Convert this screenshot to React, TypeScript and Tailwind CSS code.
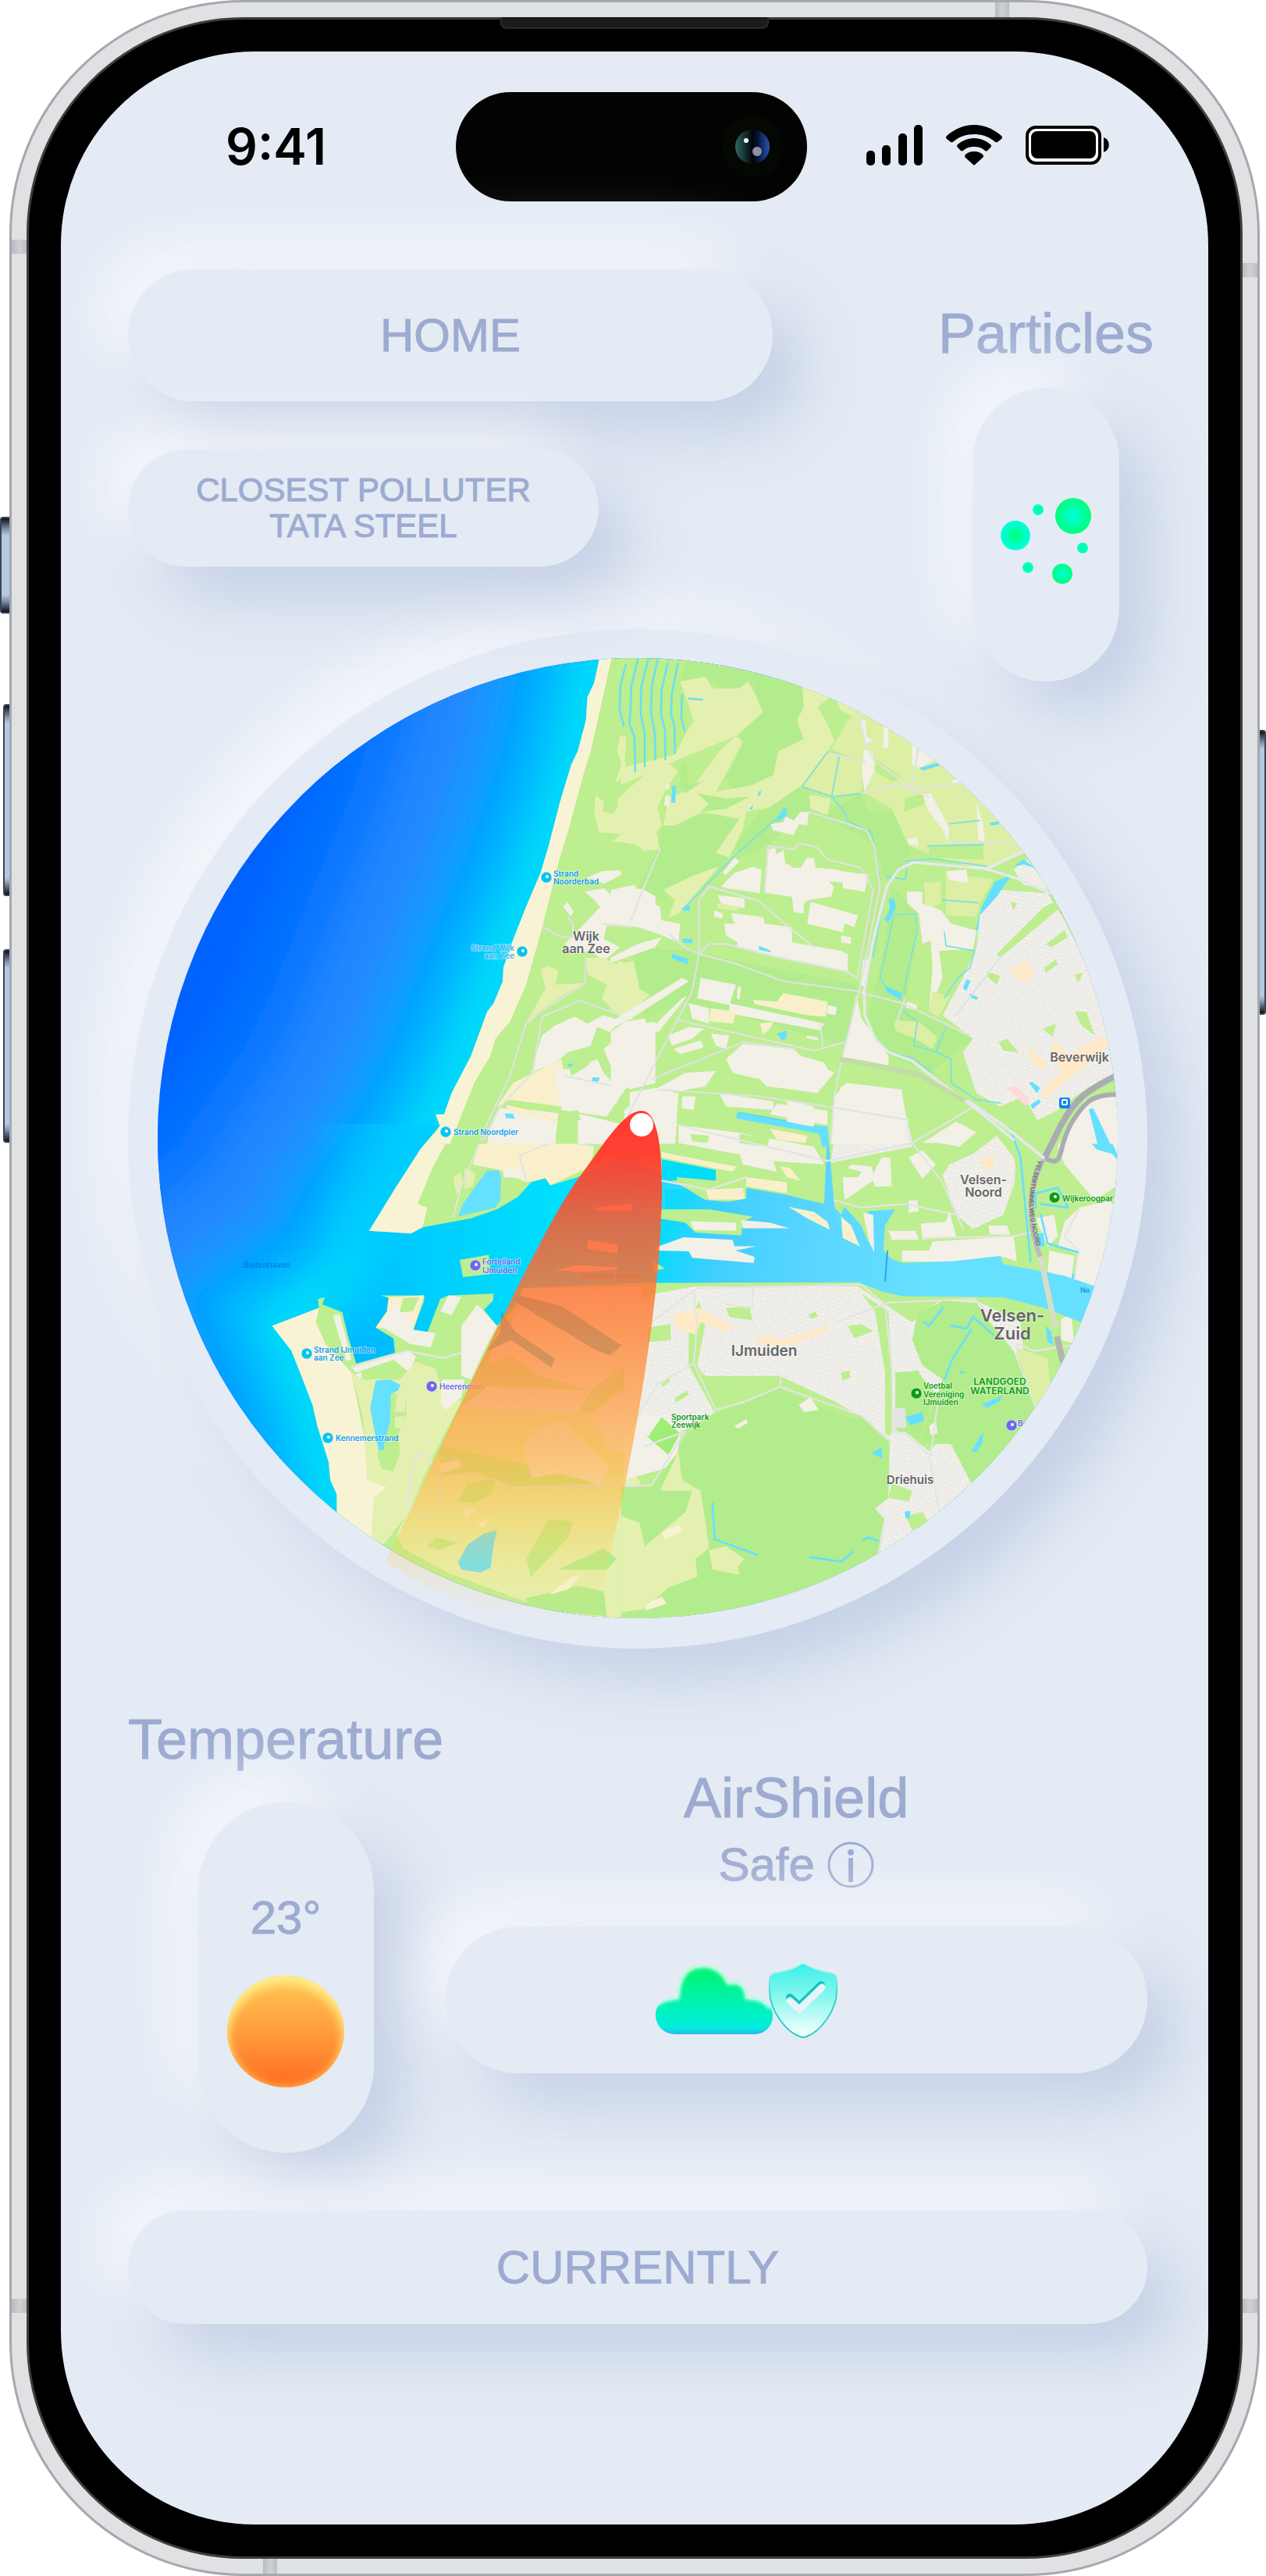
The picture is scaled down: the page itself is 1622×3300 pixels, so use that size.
import React from "react";

type Area = [fill: string, points: string];

const FOREST = "#b3ec8c";
const GRASS = "#bdee90";
const DUNE = "#e4f0b0";
const FIELD = "#dcefa5";
const TOWN = "#f3f0e8";
const SAND = "#f9f0cb";
const BEACH = "#f9f3d6";
const WATER = "#66e0ff";
const SHOPS = "#ffe9c6";
const STREETS = "url(#streets)";

/* ---------- Map data, one block per quadrant ---------- */

const northWest: Area[] = [
  [GRASS, "1466,100 1466,150 1450,220 1430,260 1425,330 1400,420 1380,460 1345,570 1310,700 1285,780 1240,880 1195,990 1170,1060 1168,1100 1140,1165 1120,1190 1070,1320 1010,1430 975,1525 940,1580 1560,1580 1560,100"],
  [BEACH, "1466,130 1466,150 1450,220 1430,260 1425,330 1400,420 1380,460 1345,570 1310,700 1285,780 1240,880 1195,990 1170,1060 1168,1100 1140,1165 1120,1190 1070,1320 1010,1430 975,1525 940,1580 1005,1580 1080,1400 1130,1320 1145,1270 1190,1220 1240,1110 1290,940 1340,750 1375,640 1420,480 1440,420 1508,130"],
  [DUNE, "1530,375 1550,378 1545,450 1555,490 1515,515 1535,460 1522,420"],
  [DUNE, "1455,550 1480,570 1478,600 1510,605 1530,570 1568,520 1640,560 1660,640 1600,700 1540,690 1505,688 1535,665 1465,660 1450,600"],
  [TOWN, "1425,795 1475,775 1530,772 1535,785 1480,812 1450,800"],
  [TOWN, "1420,835 1480,825 1520,860 1568,830 1640,820 1640,935 1490,935 1480,975 1530,1000 1480,1040 1440,1010 1380,1020 1360,990 1410,940 1470,880 1440,850"],
  [TOWN, "1355,880 1368,866 1388,895 1378,908"],
  [DUNE, "1285,1065 1310,1055 1340,1070 1330,1110 1420,1105 1340,1150 1280,1190 1240,1225 1300,1120"],
  [DUNE, "1425,1030 1480,1030 1520,1050 1600,1035 1640,1110 1600,1190 1510,1190 1475,1150 1490,1110 1430,1080"],
  [TOWN, "1290,1260 1330,1230 1390,1205 1430,1225 1480,1200 1530,1215 1500,1250 1460,1235 1440,1290 1370,1310 1330,1340 1255,1370 1280,1290"],
  [TOWN, "1480,1300 1568,1230 1640,1220 1640,1400 1560,1420 1510,1370"],
  [SAND, "1200,1400 1350,1330 1360,1390 1345,1470 1190,1450 1150,1470"],
  [TOWN, "1325,1360 1380,1360 1460,1330 1480,1370 1535,1430 1490,1500 1350,1480"],
  [TOWN, "1160,1475 1260,1480 1340,1490 1330,1580 1120,1580 1130,1520"],
  [SAND, "1180,1465 1330,1500 1340,1520 1180,1480"],
  [TOWN, "1400,1490 1568,1530 1568,1580 1400,1580"],
  [GRASS, "1370,1330 1400,1325 1410,1345 1440,1335 1430,1350 1380,1380"],
  [GRASS, "1350,1490 1400,1480 1410,1510 1355,1505"],
  [WATER, "1175,1490 1200,1492 1205,1506 1178,1504"],
  [WATER, "1445,1384 1468,1384 1464,1396 1443,1396"],
  [WATER, "1368,1345 1385,1342 1382,1352 1368,1352"],
];
const northWestRoads = [
  "1290,938 1345,968 1385,970 1385,930 1370,910",
  "1425,1030 1422,1108 1300,1180 1240,1225 1190,1380 1120,1520 1100,1568",
  "1290,1205 1405,1157 1568,1212",
  "1290,1205 1260,1370 1160,1470 1110,1568",
  "1480,930 1568,940",
  "1360,1380 1510,1410 1520,1460",
];

const northEast: Area[] = [
  [FOREST, "185,150 525,220 560,235 530,290 505,330 530,390 490,410 440,490 380,530 330,550 300,500 350,400 340,370 405,310 380,220 300,240 240,200 165,210"],
  [FOREST, "110,640 200,610 340,600 340,700 280,770 200,790 120,830 130,870 40,820 100,710"],
  [FOREST, "480,535 540,530 560,590 600,600 700,545 720,600 830,600 850,700 830,745 780,820 730,690 640,640 540,600 420,700 330,740 340,680 400,600 440,580"],
  [FOREST, "20,1000 190,1010 380,1050 690,1110 680,1300 620,1280 400,1220 180,1160 60,1210 40,1100"],
  [FOREST, "790,820 860,890 860,1000 830,1170 1030,1270 900,1370 760,1310 720,1200 760,1040"],
  [DUNE, "165,215 240,200 260,235 340,235 365,215 385,250 410,305 330,375 270,400 170,440 60,490 -10,520 -10,470 150,430 185,360 205,330"],
  [DUNE, "-20,560 60,490 130,455 160,480 130,520 100,580 90,640 105,710 60,715 -20,660"],
  [DUNE, "330,375 350,392 320,450 270,540 380,520 440,490 455,420 530,385 510,330 530,290 525,225 610,260 570,290 600,340 620,390 600,420 525,520 430,585 360,600 350,650 310,735 270,720 340,620 230,600 150,640 115,640 130,560 200,530 280,420"],
  [DUNE, "620,260 690,300 680,320 640,300"],
  [DUNE, "115,830 200,790 280,760 160,900 130,912 150,860"],
  [DUNE, "-20,1040 20,1050 20,1110 75,1140 10,1200 -20,1200"],
  [DUNE, "545,550 610,560 600,610 550,590"],
  [FOREST, "215,545 300,560 370,555 300,590 225,600 250,575"],
  [FOREST, "165,460 180,450 190,520 230,510 180,545 165,520"],
  [FIELD, "660,330 700,300 780,350 940,450 1060,570 1140,660 1190,720 1060,770 960,745 840,700 790,590 710,545 705,450 610,415"],
  [FIELD, "600,425 710,452 700,540 620,555 525,525"],
  [FIELD, "885,810 935,805 935,870 890,890"],
  [FIELD, "950,780 1090,800 1050,870 1040,910 950,905"],
  [GRASS, "745,445 820,500 790,510 740,480"],
  [GRASS, "830,560 900,540 880,580 825,600"],
  [GRASS, "900,700 1060,690 1060,740 900,735"],
  [TOWN, "695,330 712,330 715,375 735,390 710,400"],
  [TOWN, "765,345 780,355 780,410 765,410"],
  [TOWN, "708,415 735,425 738,480 708,540 702,480"],
  [TOWN, "850,395 930,440 870,470 850,460"],
  [TOWN, "835,680 865,675 870,700 840,695"],
  [TOWN, "880,545 905,545 940,610 960,650 955,690 940,650 900,600"],
  [TOWN, "1040,570 1060,640 1065,690 1045,680"],
  [TOWN, "965,510 985,500 1000,515 965,520"],
  [TOWN, "430,635 470,630 475,612 500,625 520,600 545,600 540,640 515,636 500,668 440,655"],
  [TOWN, "285,820 325,780 380,762 405,770 400,840 300,825"],
  [TOWN, "425,712 445,705 450,725 470,712 475,750 500,765 520,765 540,735 560,735 565,765 630,770 640,775 720,785 710,835 645,825 645,808 605,805 620,822 610,850 545,860 530,870 530,900 500,895 495,850 415,838"],
  [TOWN, "550,865 690,905 680,940 650,930 645,955 540,930"],
  [TOWN, "640,965 670,970 668,990 640,985"],
  [TOWN, "315,898 410,910 415,930 495,940 495,985 640,1010 660,1020 660,1070 470,1035 330,1000 335,985 300,965 295,930 325,930"],
  [TOWN, "265,890 290,900 290,915 265,910"],
  [TOWN, "275,845 355,855 355,885 285,870"],
  [FIELD, "275,870 345,880 330,892 275,885"],
  [TOWN, "290,780 325,735 340,745 300,785"],
  [TOWN, "122,520 134,518 132,532 124,532"],
  [TOWN, "120,555 134,550 130,585 118,580"],
  [TOWN, "-40,830 30,815 50,860 105,880 110,920 165,930 160,985 100,960 40,940 -40,930"],
  [TOWN, "-40,1030 40,990 110,970 90,1000 -40,1045"],
  [TOWN, "225,1090 330,1110 310,1170 215,1150"],
  [TOWN, "190,1165 250,1180 250,1225 200,1210"],
  [TOWN, "310,1165 590,1225 580,1245 310,1195"],
  [TOWN, "335,1115 345,1118 340,1155 332,1150"],
  [TOWN, "600,1170 628,1176 624,1200 598,1195"],
  [TOWN, "538,1260 572,1266 570,1274 538,1268"],
  [TOWN, "-40,1220 170,1090 190,1100 20,1210 -40,1240"],
  [TOWN, "80,1240 170,1150 185,1145 100,1250"],
  [TOWN, "0,1220 60,1210 80,1270 30,1380 -40,1480 -40,1250"],
  [TOWN, "130,1260 190,1235 235,1240 200,1270 140,1290"],
  [TOWN, "145,1300 225,1275 235,1295 165,1315"],
  [TOWN, "255,1255 310,1260 300,1300 270,1290"],
  [TOWN, "300,1330 350,1285 500,1300 520,1320 590,1340 600,1360 620,1370 570,1430 420,1410 400,1390 320,1370"],
  [TOWN, "90,1420 180,1370 270,1365 240,1410 160,1425"],
  [TOWN, "0,1480 70,1420 160,1430 150,1580 0,1580"],
  [TOWN, "170,1440 210,1440 205,1480 170,1475"],
  [TOWN, "280,1430 440,1455 440,1480 300,1470"],
  [TOWN, "480,1450 560,1470 560,1530 480,1520"],
  [TOWN, "685,1140 700,1210 780,1320 780,1350 645,1325"],
  [TOWN, "655,1400 820,1420 830,1580 610,1580 620,1440"],
  [TOWN, "705,1035 722,1035 712,1115 696,1112"],
  [TOWN, "835,835 880,835 880,870 935,890 965,930 1040,950 1030,1005 930,1010 940,1090 900,1190 910,1060 905,980 880,990 870,900 835,870"],
  [TOWN, "950,775 1010,770 1015,810 960,800"],
  [TOWN, "835,1160 865,1170 860,1185 832,1178"],
  [FIELD, "910,1130 960,1145 930,1205 900,1190"],
  [SAND, "380,1155 450,1160 470,1135 600,1160 595,1205 540,1200 385,1168"],
  [SAND, "255,1180 330,1190 320,1225 250,1218"],
  [SAND, "400,1225 440,1220 430,1240 410,1258"],
  [STREETS, "1110,830 1250,840 1300,920 1380,1080 1440,1280 1450,1370 1360,1420 1280,1480 1220,1510 1180,1440 1110,1470 1040,1430 1000,1310 1030,1270 940,1200 1000,1090 1040,1000 1050,900"],
  [STREETS, "1150,770 1190,740 1260,830 1180,815"],
  [GRASS, "1100,1020 1240,880 1280,860 1290,880 1110,1030"],
  [GRASS, "1245,990 1300,950 1310,970 1260,1000"],
  [GRASS, "1140,865 1160,870 1150,890"],
  [GRASS, "1070,1070 1110,1085 1100,1110 1075,1090"],
  [GRASS, "1240,1060 1275,1035 1280,1050 1245,1075"],
  [GRASS, "1330,1190 1365,1190 1375,1220 1390,1260 1350,1230"],
  [GRASS, "1235,1240 1275,1225 1265,1265"],
  [GRASS, "1105,1280 1130,1270 1165,1310 1120,1305"],
  [GRASS, "1330,1080 1355,1075 1340,1105"],
  [SHOPS, "1135,1070 1185,1040 1200,1060 1210,1080 1185,1105"],
  [SHOPS, "1260,1290 1275,1275 1310,1320 1400,1265 1430,1270 1430,1290 1300,1400 1240,1450 1230,1430 1290,1370"],
  [SHOPS, "1185,1290 1245,1340 1240,1365 1210,1350"],
  ["#ffd9d9", "1130,1415 1155,1408 1200,1450 1185,1468"],
  [FIELD, "800,1215 870,1220 925,1265 910,1300 860,1270 800,1245"],
  [WATER, "780,858 795,855 803,880 780,925 768,918 785,885"],
  [WATER, "768,1112 820,1135 818,1155 775,1132"],
  [WATER, "1095,805 1145,785 1100,850 1050,905 1045,950 1038,948 1055,880"],
  [WATER, "1150,760 1180,740 1212,765 1180,755"],
  [WATER, "872,470 925,455 935,462 880,478"],
  [WATER, "1080,632 1110,627 1105,637 1082,640"],
  [WATER, "140,1018 190,1035 185,1050 140,1032"],
  [WATER, "170,885 190,870 195,890 175,893"],
  [WATER, "170,975 200,975 202,988 175,986"],
  [WATER, "142,522 152,522 150,574 138,572"],
  [WATER, "470,588 480,590 478,612 450,630 455,610"],
  [WATER, "395,545 404,535 402,550 392,553"],
  [WATER, "368,592 380,578 378,594"],
  [WATER, "450,1255 480,1245 478,1270 465,1274"],
  [WATER, "397,995 433,1010 430,1014 398,1007"],
  [WATER, "335,1487 560,1530 598,1527 604,1590 585,1590 575,1550 330,1505"],
  [WATER, "1020,1135 1045,1148 1040,1155 1020,1146"],
  [WATER, "1010,1095 1022,1098 1010,1128 1000,1120"],
  [WATER, "1195,1400 1205,1397 1228,1415 1218,1430"],
  [WATER, "1200,1465 1225,1448 1230,1458 1205,1478"],
  [TOWN, "1300,1550 1400,1440 1450,1445 1470,1580 1300,1580"],
  [WATER, "1372,1478 1385,1475 1440,1590 1400,1590"],
];
const northEastRoads = [
  "105,710 50,840 20,920",
  "250,820 220,860 220,1020 200,1130 60,1400 0,1520",
  "130,960 180,1000 222,1020 320,1045 470,1100 680,1128 820,1165 1020,1260",
  "222,1020 250,990 300,990 460,1030 650,1070 690,1090",
  "415,835 425,700 500,710 515,692 570,705 600,740 700,765 735,830 690,1080",
  "250,820 395,862 480,935 560,1000",
  "545,600 650,632 715,655 738,700 755,820 700,1100 640,1340 620,1440 610,1568",
  "160,1215 560,1305 650,1280",
  "80,1390 350,1280 500,1300",
  "690,300 712,400 740,450 870,545 900,555",
  "610,428 710,450",
  "700,545 800,520 850,530 990,515",
  "870,410 848,525",
  "960,690 1150,690",
  "100,1420 400,1440 600,1470 840,1510",
  "580,1225 585,1290",
  "1110,1030 980,1200",
  "800,1230 830,1150",
];
const northEastHighways = [
  "775,820 810,770 855,748 980,760 1070,768 1180,715",
  "1070,768 1170,800 1260,840",
  "775,820 730,1000 708,1130 710,1200 740,1270 780,1310 850,1335 920,1390 1030,1470 1150,1568",
];
const northEastCanals = [
  "600,422 525,525 615,555 705,545",
  "635,435 612,555 655,605 655,625 730,660 755,800",
  "480,592 330,725 175,885",
  "830,745 910,738 1070,760",
  "895,700 1060,697",
  "960,635 1050,625",
  "775,790 830,800 835,750",
  "795,910 755,1090 770,1115",
  "780,905 860,900 865,950 835,1080 825,1140",
  "735,1030 770,830",
  "945,955 950,995 1035,1010 1020,1060 985,1090 945,1150",
  "940,860 1045,868",
  "820,1185 865,1220 855,1290 925,1310 965,1330 965,1400 1040,1450 1110,1460",
  "920,1310 950,1235",
  "868,410 860,465",
  "775,1310 850,1325 910,1370",
];

const southWest: Area[] = [
  [GRASS, "975,90 915,155 840,260 755,385 885,392 920,375 1070,350 1150,325 1215,290 1255,250 1300,238 1315,258 1400,235 1470,205 1568,175 1700,180 1700,90"],
  [BEACH, "960,60 975,95 915,155 840,260 755,385 885,392 920,375 935,320 905,310 950,210 1005,120 1040,60"],
  [SAND, "1100,130 1170,60 1340,130 1450,150 1440,205 1315,258 1300,238 1240,250 1160,215 1075,200"],
  [TOWN, "1170,210 1230,215 1250,240 1170,235"],
  [TOWN, "1160,40 1350,60 1340,130 1150,60"],
  [DUNE, "1015,235 1040,222 1045,260 1025,285"],
  [DUNE, "1050,210 1085,225 1075,260 1050,270"],
  [TOWN, "1340,90 1500,100 1520,150 1350,130"],
  [GRASS, "1340,112 1400,118 1480,128 1470,142 1345,128"],
  [WATER, "1120,216 1155,216 1163,235 1160,300 1145,320 1030,345 1045,310"],
  [GRASS, "1035,466 1125,452 1130,505 1045,514"],
  [GRASS, "455,650 600,600 597,575 618,570 610,590 672,612 690,680 715,755 835,725 830,685 775,655 810,610 817,572 790,565 925,565 925,580 890,665 930,680 975,575 1000,565 1140,560 1138,580 1110,605 1150,650 1200,600 1230,545 1600,530 1700,530 1700,1568 655,1568 655,1120 635,1080 630,1030 595,930 580,870 550,800 515,720"],
  [BEACH, "455,650 600,600 590,640 620,700 700,780 740,960 750,1080 810,1100 770,1130 760,1300 655,1300 655,1120 635,1080 630,1030 595,930 580,870 550,800 515,720"],
  [TOWN, "643,620 665,618 700,745 685,748"],
  [SAND, "815,570 925,565 890,665 775,655 810,610"],
  [GRASS, "860,572 910,570 890,610 850,612"],
  [TOWN, "790,650 840,575 850,612 885,620 885,660 960,670 945,710 880,700"],
  [TOWN, "975,610 1000,565 1040,570 1010,620"],
  [TOWN, "1040,650 1090,590 1150,650 1110,720 1070,800 1040,790"],
  [TOWN, "700,765 875,720 900,735 880,780 830,745 715,780"],
  [TOWN, "715,785 730,778 738,820 728,820"],
  [DUNE, "700,780 740,800 850,800 900,750 960,770 990,850 1040,860 960,1000 870,1180 800,1260 760,1250 770,1130 810,1100 750,1080 735,900"],
  [GRASS, "820,830 870,860 870,900 845,950 850,1010 830,1055 795,1050 780,1010"],
  [DUNE, "840,845 870,850 865,890 835,890"],
  [DUNE, "835,905 865,900 860,935 835,935"],
  [TOWN, "980,800 1050,800 1040,850 990,885 975,860"],
  [WATER, "775,803 820,800 852,815 845,830 822,840 820,920 805,960 800,995 785,998 775,960 758,880"],
  [DUNE, "1040,880 1460,890 1540,1000 1600,1100 1600,1240 1580,1480 1400,1460 1240,1420 1000,1340 860,1270 840,1230"],
  [GRASS, "970,980 1200,1030 1460,1090 1200,1100 1080,1060 980,1070"],
  [GRASS, "1060,1090 1150,1075 1130,1120 1080,1145 1030,1140"],
  [GRASS, "1310,1190 1385,1195 1370,1240 1320,1290 1255,1350 1240,1300"],
  [FOREST, "1340,1330 1480,1270 1520,1300 1490,1330 1400,1330"],
  [FOREST, "1240,1410 1400,1375 1480,1390 1490,1460 1250,1440"],
  [GRASS, "935,1265 960,1240 1030,1255 970,1275"],
  [BEACH, "1310,1400 1380,1350 1410,1345 1370,1385"],
  [BEACH, "1045,1160 1085,1160 1055,1192"],
  [BEACH, "1090,1200 1130,1185 1105,1215"],
  [TOWN, "975,1035 1035,1020 1040,1045 975,1060"],
  [STREETS, "1200,640 1230,545 1600,540 1600,720 1440,830 1280,790 1190,730 1120,760 1160,660"],
  [STREETS, "1040,880 1120,820 1440,830 1400,892"],
  [STREETS, "1260,940 1360,910 1400,960 1500,1040 1470,1095 1350,1060 1260,1075 1230,1000"],
  [STREETS, "1440,900 1500,850 1600,800 1600,1000 1500,1000"],
  ["#2ba8c8", "1200,560 1350,595 1535,705 1500,732 1460,720 1200,580"],
  ["#2ba8c8", "1165,610 1205,665 1330,742 1318,766 1195,690 1120,720 1160,670"],
  [WATER, "1150,1220 1140,1260 1130,1325 1100,1338 1040,1330 1030,1310 1060,1260 1110,1230"],
  [TOWN, "1430,410 1568,430 1568,455 1430,435"],
  [TOWN, "1330,495 1400,480 1568,490 1420,500"],
  [TOWN, "1450,320 1568,310 1568,330 1460,330"],
];
const southWestRoads = [
  "1160,0 1040,260 1015,345",
  "1165,60 1340,130 1450,150",
  "1340,130 1220,175 1240,245",
  "700,765 870,720 985,740 1040,725",
  "905,1010 880,1080 875,1150 925,1185 980,1130 975,1070 930,1010 905,1010",
  "975,1070 1080,1060 1200,1100 1568,1097",
  "1400,895 1568,740",
];

const southEast: Area[] = [
  [STREETS, "90,560 210,540 690,540 770,590 850,640 930,580 1040,580 1170,640 1180,730 1050,840 920,840 860,770 860,900 780,970 700,900 460,820 270,890 180,940 60,980 0,960 0,600"],
  [TOWN, "60,900 170,930 150,1040 0,1080 0,950"],
  [FOREST, "180,960 270,890 360,865 460,822 560,860 700,900 780,965 780,1160 770,1290 560,1420 300,1470 -10,1480 -10,1100 80,1095 160,1000"],
  [FOREST, "865,620 940,580 1040,585 1080,640 1150,720 1220,880 1100,1050 1025,1090 960,975 870,980 900,900 940,800 880,760 850,690"],
  [FOREST, "800,780 870,775 900,880 870,970 800,940"],
  [FIELD, "1155,710 1250,740 1260,840 1215,880"],
  [DUNE, "160,1000 170,1080 225,1110 240,1200 250,1270 210,1300 215,1350 130,1380 60,1440 -10,1450 -10,1180 45,1200 60,1265 180,1170 200,1110 105,1110"],
  [DUNE, "250,1275 300,1265 355,1300 335,1320 340,1345 260,1330"],
  [BEACH, "110,1225 160,1205 175,1220 120,1245"],
  [BEACH, "70,1425 110,1405 125,1425 60,1445"],
  [GRASS, "70,655 135,645 138,690 68,695"],
  [GRASS, "300,600 370,595 378,635 310,625"],
  [GRASS, "190,650 220,580 240,640 215,760 280,870 265,890 190,760"],
  [GRASS, "200,750 240,790 460,790 620,860 730,920 640,900 460,825 270,895"],
  [GRASS, "660,650 700,645 735,665 680,685"],
  [GRASS, "640,780 665,775 668,795 645,803"],
  [GRASS, "545,618 565,610 570,625 550,630"],
  [GRASS, "110,810 135,795 135,805 112,820"],
  [GRASS, "150,850 185,830 190,842 150,865"],
  [GRASS, "700,560 780,610 790,770 790,960 770,950 770,780 740,610"],
  ["#9fee77", "70,960 110,905 165,950 130,1010 50,945"],
  [TOWN, "325,930 360,910 365,920 335,937"],
  [TOWN, "515,870 550,850 575,885 530,890"],
  ["#e3e5e4", "795,880 830,878 832,935 797,935"],
  [STREETS, "785,950 830,945 900,1000 920,980 965,980 1025,1090 930,1170 780,1280 750,1290 770,1190 740,1160 780,1130"],
  [GRASS, "790,1090 850,1110 840,1140 780,1130"],
  [GRASS, "880,1170 900,1200 850,1220 830,1180"],
  [TOWN, "900,930 920,915 925,950 905,955"],
  [SHOPS, "145,620 220,600 300,640 320,655 300,668 225,640 210,675 150,655"],
  [SHOPS, "390,685 430,675 450,690 590,655 595,630 603,665 480,705 440,705 395,700"],
  [STREETS, "640,-20 820,0 850,150 610,195"],
  [TOWN, "450,30 600,50 600,90 430,60"],
  [TOWN, "0,0 140,-20 150,90 60,100 0,50"],
  [TOWN, "160,90 330,110 560,150 590,200 440,190 160,140"],
  [GRASS, "195,115 250,120 245,140 200,135"],
  [GRASS, "340,115 430,125 420,150 340,140"],
  [SAND, "110,165 240,190 330,205 320,220 110,180"],
  [SAND, "430,100 540,120 535,140 450,130"],
  [TOWN, "340,170 440,190 450,220 350,200"],
  [SAND, "360,235 480,250 480,280 360,260"],
  [SAND, "240,270 350,265 355,298 250,298"],
  [SAND, "460,205 490,210 520,245 480,235"],
  [TOWN, "645,235 690,235 700,220 660,210 670,200 730,205 735,225 760,180 785,180 790,260 740,262 735,245 650,300"],
  [TOWN, "840,180 880,160 920,200 880,240"],
  [TOWN, "880,140 980,80 1040,110 990,150 930,140"],
  [STREETS, "960,200 1030,170 1100,120 1150,180 1160,230 1120,340 1030,380 980,340 940,230"],
  [SHOPS, "1055,180 1095,178 1085,215 1060,210"],
  [TOWN, "875,365 950,360 960,330 980,400 880,410"],
  [TOWN, "780,385 860,385 870,410 790,410"],
  [TOWN, "1075,370 1130,370 1140,395 1080,395"],
  [TOWN, "840,300 865,300 870,330 840,335"],
  [TOWN, "820,440 900,440 910,415 1150,400 1160,470 1110,455 970,472 820,470"],
  [GRASS, "1160,100 1240,150 1200,250 1220,420 1240,500 1160,485 1150,300"],
  [GRASS, "1220,200 1320,180 1380,260 1300,340 1230,340"],
  [TOWN, "1280,150 1360,20 1470,0 1470,250 1390,300 1300,200"],
  [TOWN, "1345,320 1430,300 1470,330 1420,550 1330,520 1340,450 1280,430 1300,360"],
  [TOWN, "1215,350 1270,340 1280,400 1250,430"],
  [TOWN, "1255,440 1330,455 1320,520 1250,500"],
  [TOWN, "1290,630 1320,620 1330,700 1290,690"],
  ["#00dcfa", "110,185 270,215 270,245 155,235 155,245 110,240"],
  ["url(#canalWater)", "120,268 185,268 235,298 300,305 360,295 360,265 480,285 590,310 600,100 560,97 330,70 335,53 570,92 600,95 620,315 640,400 690,430 670,380 640,340 650,318 700,370 730,440 720,330 800,325 770,370 765,440 790,465 820,475 970,470 1110,455 1120,478 1160,485 1300,510 1400,545 1350,640 1240,600 1120,570 820,567 765,555 690,528 -20,530 -20,345 130,350 120,320"],
  [GRASS, "110,325 250,325 380,345 350,360 345,398 210,390 180,362 100,350"],
  [TOWN, "195,358 330,362 330,385 205,382"],
  [TOWN, "345,355 430,362 488,378 350,378"],
  [SAND, "485,318 560,332 600,360 607,382 540,350"],
  [SAND, "640,345 670,370 695,428 645,405"],
  [TOWN, "705,335 735,340 738,445 725,420"],
  [TOWN, "95,430 175,403 320,410 325,428 390,428 328,440 385,458 382,475 200,460 190,442 95,440"],
  [GRASS, "85,470 120,490 85,497"],
  [WATER, "1370,130 1410,120 1380,40 1392,38 1470,200 1440,170 1395,158"],
  [WATER, "1218,395 1238,390 1240,430 1222,428"],
  [WATER, "1245,650 1260,665 1268,705 1250,695"],
  [WATER, "830,905 880,890 885,915 845,928"],
  [WATER, "730,1005 760,988 762,1020"],
  [WATER, "828,1168 845,1166 842,1188 830,1184"],
  [WATER, "1055,870 1115,845 1110,860 1070,880"],
  [WATER, "1025,1000 1060,945 1058,975 1040,1003"],
  [WATER, "988,775 1006,778 998,786"],
];
const southEastRoads = [
  "60,985 180,945 80,1095 0,1097",
  "0,960 100,810 205,755 270,885 360,860 460,820 700,900 780,970",
  "460,785 462,820",
  "205,755 215,640 205,560",
  "380,545 380,600 300,590",
  "80,640 215,545 700,535 770,590 790,770 793,945",
  "625,640 780,585 1035,575 1070,610",
  "793,945 830,950 900,1010 910,1060 930,1170",
  "925,870 905,1010",
  "0,50 200,100 600,190",
  "600,190 850,140 1030,40",
  "850,140 940,250 1000,380",
  "840,100 850,140",
  "880,405 1150,400 1200,390",
  "620,300 700,320 830,310 980,340",
  "110,245 250,270 360,235",
  "1160,700 1160,740 1215,880",
  "1160,700 1210,720 1320,705",
  "770,1180 750,1290",
  "1345,320 1300,400 1340,440 1330,520",
];
const southEastCanals = [
  "260,1145 267,1245 390,1288",
  "548,1295 640,1308 675,1280",
  "705,1248 720,1240 750,1250",
  "965,650 1010,658 1030,625 1090,675",
  "885,640 900,650 940,600",
  "1025,660 970,740 945,800",
  "1215,320 1215,280 1280,265 1310,320 1230,310",
  "1230,340 1250,420 1340,445",
  "1140,100 1170,180 1200,470",
];

const waterworks = [
  "40,148 20,230 18,300 15,340 30,380 32,480",
  "70,150 50,230 48,310 60,370 60,465",
  "98,152 82,220 78,300 90,370 91,445",
  "128,160 110,240 108,310 120,360 121,445",
  "158,162 140,250 138,310 148,350 149,425",
  "170,255 168,320 178,362",
  "190,265 230,268",
  "4,165 -12,230 -14,300 -2,345",
];

const polys = (areas: Area[]) =>
  areas.map(([fill, points], i) => <polygon key={i} fill={fill} points={points} />);

const lines = (list: string[], stroke: string, width: number) => (
  <g fill="none" stroke={stroke} strokeWidth={width} strokeLinejoin="round" strokeLinecap="round">
    {list.map((points, i) => (
      <polyline key={i} points={points} />
    ))}
  </g>
);

/* ---------- Map labels ---------- */

type Label = {
  x: number;
  y: number;
  text: string;
  size: number;
  fill: string;
  anchor?: "start" | "middle" | "end";
  opacity?: number;
};
const PLACE = "#666668";
const POI = "#14a0ee";
const PARK = "#0c9c14";
const SIGHT = "#6f66ee";

const labels: Label[] = [
  { x: 751, y: 1205, text: "Wijk", size: 16, fill: PLACE, anchor: "middle" },
  { x: 751, y: 1221, text: "aan Zee", size: 16, fill: PLACE, anchor: "middle" },
  { x: 1383, y: 1360, text: "Beverwijk", size: 16, fill: PLACE, anchor: "middle" },
  { x: 1260, y: 1517, text: "Velsen-", size: 16, fill: PLACE, anchor: "middle" },
  { x: 1260, y: 1533, text: "Noord", size: 16, fill: PLACE, anchor: "middle" },
  { x: 979, y: 1737, text: "IJmuiden", size: 19, fill: PLACE, anchor: "middle" },
  { x: 1297, y: 1693, text: "Velsen-", size: 22, fill: PLACE, anchor: "middle" },
  { x: 1297, y: 1716, text: "Zuid", size: 22, fill: PLACE, anchor: "middle" },
  { x: 1166, y: 1901, text: "Driehuis", size: 15, fill: PLACE, anchor: "middle" },
  { x: 709, y: 1123, text: "Strand", size: 10, fill: POI },
  { x: 709, y: 1133, text: "Noorderbad", size: 10, fill: POI },
  { x: 659, y: 1218, text: "Strand Wijk", size: 10, fill: "#3cb4f8", anchor: "end" },
  { x: 659, y: 1228, text: "aan Zee", size: 10, fill: "#3cb4f8", anchor: "end" },
  { x: 581, y: 1454, text: "Strand Noordpier", size: 10, fill: POI },
  { x: 402, y: 1733, text: "Strand IJmuiden", size: 10, fill: POI },
  { x: 402, y: 1743, text: "aan Zee", size: 10, fill: POI },
  { x: 430, y: 1846, text: "Kennemerstrand", size: 10, fill: POI },
  { x: 312, y: 1624, text: "Buitenhaven", size: 10, fill: "#0a5fc8", opacity: 0.6 },
  { x: 618, y: 1620, text: "Forteiland", size: 10, fill: SIGHT },
  { x: 618, y: 1631, text: "IJmuiden", size: 10, fill: SIGHT },
  { x: 563, y: 1780, text: "Heerenduin", size: 10, fill: SIGHT },
  { x: 860, y: 1819, text: "Sportpark", size: 10, fill: PARK },
  { x: 860, y: 1829, text: "Zeewijk", size: 10, fill: PARK },
  { x: 1183, y: 1779, text: "Voetbal", size: 10, fill: PARK },
  { x: 1183, y: 1790, text: "Vereniging", size: 10, fill: PARK },
  { x: 1183, y: 1800, text: "IJmuiden", size: 10, fill: PARK },
  { x: 1361, y: 1539, text: "Wijkeroogpark", size: 10, fill: PARK },
  { x: 1281, y: 1774, text: "LANDGOED", size: 12, fill: PARK, anchor: "middle" },
  { x: 1281, y: 1786, text: "WATERLAND", size: 12, fill: PARK, anchor: "middle" },
  { x: 1304, y: 1827, text: "Be", size: 10, fill: SIGHT },
];

const pins: [x: number, y: number, fill: string][] = [
  [700, 1124, "#08c4ee"],
  [669, 1219, "#08c4ee"],
  [571, 1450, "#08c4ee"],
  [393, 1734, "#08c4ee"],
  [420, 1842, "#08c4ee"],
  [609, 1621, SIGHT],
  [553, 1776, SIGHT],
  [1351, 1534, PARK],
  [1174, 1785, PARK],
  [1296, 1826, SIGHT],
];

const COAST =
  "M800 740 L768 845 L735 1000 L695 1120 L645 1240 L590 1380 L540 1480 L473 1577 L445 1640 L365 1698 L400 1790 L420 1870 L440 1960 L450 2120";

const seaBands: [stroke: string, width: number][] = [
  ["#006eff", 640],
  ["#0a79ff", 530],
  ["#2187ff", 430],
  ["#1f95ff", 300],
  ["#00a0ff", 230],
  ["#00baff", 150],
  ["#00d8fa", 70],
];

function AirMap() {
  return (
    <svg viewBox="164 806 1306 1306" className="block h-auto w-full" role="img" aria-label="Map of IJmuiden with the pollution plume of Tata Steel">
      <defs>
        <clipPath id="mapDisc">
          <circle cx="817" cy="1458" r="615" />
        </clipPath>
        <filter id="seaBlur" x="-50%" y="-20%" width="200%" height="140%">
          <feGaussianBlur stdDeviation="18" />
        </filter>
        <pattern id="streets" width="26" height="22" patternUnits="userSpaceOnUse" patternTransform="rotate(14)">
          <rect width="26" height="22" fill="#f3f0e8" />
          <path d="M0 2H26M2 0V22M14 2V13M0 13H26" stroke="#e6e8ea" strokeWidth="2.5" fill="none" />
        </pattern>
        <linearGradient id="channel" gradientUnits="userSpaceOnUse" x1="400" x2="1150" y1="0" y2="0">
          <stop offset="0" stopColor="#00c0ff" stopOpacity="0" />
          <stop offset=".18" stopColor="#00ccff" />
          <stop offset=".45" stopColor="#00e2fc" />
          <stop offset=".7" stopColor="#40d4ff" />
          <stop offset="1" stopColor="#66e0ff" />
        </linearGradient>
        <linearGradient id="canalWater" gradientUnits="userSpaceOnUse" x1="90" x2="900" y1="300" y2="460">
          <stop offset="0" stopColor="#00dcfc" />
          <stop offset=".25" stopColor="#40cfff" />
          <stop offset=".6" stopColor="#5bd6ff" />
          <stop offset="1" stopColor="#66e0ff" />
        </linearGradient>
        <linearGradient id="plume" gradientUnits="userSpaceOnUse" x1="0" x2="0" y1="1423" y2="2090">
          <stop offset="0" stopColor="#ff3a30" />
          <stop offset=".08" stopColor="#ff3b2f" stopOpacity=".97" />
          <stop offset=".22" stopColor="#ff5a2c" stopOpacity=".84" />
          <stop offset=".4" stopColor="#ff8038" stopOpacity=".82" />
          <stop offset=".56" stopColor="#ff9f48" stopOpacity=".76" />
          <stop offset=".68" stopColor="#ffb040" stopOpacity=".64" />
          <stop offset=".78" stopColor="#ffc040" stopOpacity=".44" />
          <stop offset=".87" stopColor="#ffd050" stopOpacity=".2" />
          <stop offset="1" stopColor="#ffe9a0" stopOpacity="0" />
        </linearGradient>
      </defs>

      <g clipPath="url(#mapDisc)">
        <rect x="164" y="806" width="1306" height="1306" fill="#0062ff" />
        <g fill="none" filter="url(#seaBlur)">
          {seaBands.map(([stroke, width]) => (
            <path key={stroke} d={COAST} stroke={stroke} strokeWidth={width} />
          ))}
        </g>
        <rect x="400" y="1440" width="1050" height="340" fill="url(#channel)" />

        <g transform="translate(800 1400) scale(.4337 .4592)">
          <polygon fill={GRASS} points="-10,-20 1500,-20 1500,500 1300,505 1160,485 820,475 765,455 620,320 240,300 180,265 -10,165" />
          <polygon fill={GRASS} points="-10,530 690,528 765,555 820,567 1120,570 1240,600 1350,635 1500,700 1500,1568 -10,1568" />
        </g>
        <rect x="795" y="806" width="675" height="640" fill={GRASS} />

        <g transform="translate(160 1400) scale(.4145 .4592)">
          {polys(southWest)}
          {lines(southWestRoads, "#e3e5e4", 5)}
        </g>
        <g transform="translate(800 1400) scale(.4337 .4592)">
          {polys(southEast)}
          {lines(southEastRoads, "#e3e5e4", 5)}
          {lines(southEastCanals, WATER, 6)}
        </g>
        <g transform="translate(160 780) scale(.4145 .4337)">
          {polys(northWest)}
          {lines(northWestRoads, "#e0e2e4", 5)}
        </g>
        <g transform="translate(800 780) scale(.4337)">
          {polys(northEast)}
          {lines(northEastCanals, "#7fdfe0", 4)}
          {lines(northEastRoads, "#e0e3e2", 5)}
          {lines(northEastHighways, "#e6e9ee", 8)}
          {lines(waterworks, "#6ce0ee", 6)}
          {lines(["640,1330 860,1370 1000,1450", "700,1340 880,1380"], "#c2dca6", 14)}
        </g>

        <g fill="none" stroke="#a9adb3" strokeWidth="6">
          <path d="M1432 1377 C1390 1398 1378 1408 1360 1440 L1338 1484" strokeWidth="8" />
          <path d="M1432 1402 C1400 1402 1390 1410 1372 1440 C1356 1470 1362 1486 1350 1488 L1338 1484" />
          <path d="M1338 1484 C1312 1530 1320 1580 1333 1610" stroke="#b9bcc0" />
          <path d="M1333 1610 L1352 1700" stroke="#dbdcc8" strokeWidth="7" />
          <path d="M1354 1712 L1362 1745" stroke="#b0b4b2" strokeWidth="8" />
          <path d="M1240 1410 L1290 1445 L1338 1484" stroke="#e6e8ea" strokeWidth="4" />
        </g>
        <path d="M1137 1602 L1134 1642" stroke="#2aa6f0" strokeWidth="2" fill="none" />

        {pins.map(([x, y, fill]) => (
          <g key={`${x}-${y}`}>
            <circle cx={x} cy={y} r="7" fill={fill} stroke="#ffffff" strokeOpacity=".5" />
            <circle cx={x + 1} cy={y - 1} r="2" fill="#ffffff" />
          </g>
        ))}
        <rect x="1357" y="1406" width="14" height="14" rx="3" fill="#0a84f5" />
        <rect x="1361" y="1409" width="6" height="6" rx="1" fill="none" stroke="#ffffff" strokeWidth="2" />

        <g className="font-['Inter',sans-serif] font-semibold">
          {labels.map((l, i) => (
            <text
              key={i}
              x={l.x}
              y={l.y}
              fontSize={l.size}
              fill={l.fill}
              textAnchor={l.anchor ?? "start"}
              opacity={l.opacity}
              stroke="#ffffff"
              strokeOpacity={l.opacity ? 0 : 0.45}
              strokeWidth="2"
              paintOrder="stroke"
            >
              {l.text}
            </text>
          ))}
          <path id="tunnelRoad" d="M1331 1486 C1310 1530 1320 1570 1332 1610" fill="none" />
          <text fontSize="8" fill="#6d6f72">
            <textPath href="#tunnelRoad">VELSERTUNNELWEG NOORD</textPath>
          </text>
          <text x="1384" y="1656" fontSize="9" fill="#2b8fe0">
            No
          </text>
          <text x="745" y="1638" fontSize="9" fill="#a06a5a">
            Noordzee Kanaal
          </text>
        </g>
      </g>

      <path
        d="M822 1423 C848 1423 850 1500 847 1561 C842 1690 812 1870 759 2093 Q620 2085 494 2001 C600 1780 700 1560 746 1503 C776 1462 800 1423 822 1423Z"
        fill="url(#plume)"
      />
      <circle cx="822" cy="1441" r="15" fill="#ffffff" />
    </svg>
  );
}

/* ---------- Icons ---------- */

function SignalIcon() {
  return (
    <svg viewBox="0 0 72 52" className="h-[52px] w-[72px]" aria-hidden="true">
      <rect x="0" y="33" width="11" height="19" rx="5" />
      <rect x="20" y="26" width="11" height="26" rx="5" />
      <rect x="41" y="11" width="11" height="41" rx="5" />
      <rect x="61" y="0" width="11" height="52" rx="5" />
    </svg>
  );
}

function WifiIcon() {
  return (
    <svg viewBox="0 0 72 52" className="h-[52px] w-[72px]" aria-hidden="true">
      <path d="M36 0C50 0 62 6 71 14Q73 16 71 18L66 22Q64 23 62 21C55 15 46 12 36 12S17 15 10 21Q8 23 6 22L1 18Q-1 16 1 14C10 6 22 0 36 0Z" />
      <path d="M36 17C45 17 52 21 57 25Q59 27 57 29L53 33Q52 34 50 33C46 29 41 28 36 28S26 29 22 33Q20 34 19 33L15 29Q13 27 15 25C20 21 27 17 36 17Z" />
      <path d="M36 34C41 34 45 36 47 38Q49 40 47 42L37 51Q36 52 35 51L25 42Q23 40 25 38C27 36 31 34 36 34Z" />
    </svg>
  );
}

function BatteryIcon() {
  return (
    <svg viewBox="0 0 108 50" className="h-[50px] w-[108px]" aria-hidden="true">
      <rect x="2" y="2" width="93" height="46" rx="11" fill="#ffffff" stroke="#000000" strokeWidth="4" />
      <rect x="7" y="7" width="83" height="35" rx="8" />
      <path d="M100 15C109 18 109 31 100 34Z" />
    </svg>
  );
}

function InfoIcon() {
  return (
    <svg viewBox="0 0 60 60" className="size-[60px]" aria-hidden="true">
      <circle cx="30" cy="30" r="28" fill="none" stroke="currentColor" strokeWidth="3" />
      <circle cx="30" cy="14" r="4" fill="currentColor" />
      <rect x="27" y="21" width="6" height="31" rx="1" fill="currentColor" />
    </svg>
  );
}

function ParticlesIcon() {
  return (
    <svg viewBox="0 0 116 112" className="h-28 w-[116px]" aria-hidden="true">
      <defs>
        <radialGradient id="mint">
          <stop offset="0" stopColor="#00ffe0" />
          <stop offset="1" stopColor="#00ff78" />
        </radialGradient>
        <radialGradient id="aqua">
          <stop offset="0" stopColor="#00ff7c" />
          <stop offset="1" stopColor="#00ffe0" />
        </radialGradient>
      </defs>
      <circle cx="93" cy="24" r="23" fill="url(#mint)" />
      <circle cx="19" cy="49" r="19" fill="url(#aqua)" />
      <circle cx="79" cy="98" r="13" fill="url(#mint)" />
      <circle cx="48" cy="16" r="7" fill="url(#aqua)" />
      <circle cx="105" cy="65" r="7" fill="url(#aqua)" />
      <circle cx="35" cy="90" r="7" fill="url(#aqua)" />
    </svg>
  );
}

const CLOUD =
  "M26 90C10 90 0 79 0 65C0 52 10 43 27 42C28 15 40 1 61 1C78 1 88 10 94 23C107 19 118 28 118 42C138 42 150 52 150 66C150 80 140 90 126 90Z";

function CloudIcon() {
  return (
    <svg viewBox="0 0 150 92" className="h-[92px] w-[150px] overflow-visible" aria-hidden="true">
      <defs>
        <linearGradient id="cloudFill" x1="0" x2="0" y1="0" y2="1">
          <stop offset=".15" stopColor="#00f47c" />
          <stop offset=".7" stopColor="#00f1c4" />
          <stop offset=".9" stopColor="#00eedc" />
          <stop offset="1" stopColor="#2cb8ee" />
        </linearGradient>
        <filter id="soft" x="-20%" y="-20%" width="140%" height="140%">
          <feGaussianBlur stdDeviation="2.5" />
        </filter>
        <clipPath id="cloudClip">
          <path d={CLOUD} />
        </clipPath>
      </defs>
      <path d={CLOUD} fill="url(#cloudFill)" />
      <g clipPath="url(#cloudClip)">
        <path
          d="M0 52Q8 43 27 42C28 15 40 1 61 1C78 1 88 10 94 23C107 19 118 28 118 42Q140 42 148 56"
          fill="none"
          stroke="#f2fff8"
          strokeWidth="7"
          filter="url(#soft)"
        />
      </g>
    </svg>
  );
}

function ShieldIcon() {
  return (
    <svg viewBox="0 0 86 98" className="h-[98px] w-[86px] overflow-visible" aria-hidden="true">
      <defs>
        <linearGradient id="shieldFill" x1="0" x2="0" y1="0" y2="1">
          <stop offset="0" stopColor="#35f0e8" />
          <stop offset=".5" stopColor="#8ff8ee" />
          <stop offset="1" stopColor="#fbfffd" />
        </linearGradient>
        <linearGradient id="shieldEdge" x1="0" x2="0" y1="0" y2="1">
          <stop offset="0" stopColor="#c4fbf4" />
          <stop offset=".45" stopColor="#2fd6cf" />
          <stop offset="1" stopColor="#27cfc9" />
        </linearGradient>
      </defs>
      <path
        d="M43 1C55 10 68 13 80 15Q86 17 86 24V38C86 62 65 90 47 96Q43 98 39 96C21 90 0 62 0 38V24Q0 17 6 15C18 13 31 10 43 1Z"
        fill="url(#shieldFill)"
        stroke="url(#shieldEdge)"
        strokeWidth="2"
      />
      <g fill="none" strokeLinecap="round" strokeLinejoin="round">
        <path d="M26 46L38 57L66 30" stroke="#10c6c2" strokeWidth="10" />
        <path d="M26 50L38 61L67 33" stroke="#e9f3f8" strokeWidth="9" />
      </g>
    </svg>
  );
}

/* ---------- Phone ---------- */

const raised =
  "bg-[#e4ebf5] shadow-[40px_40px_80px_rgba(184,196,224,0.7),-30px_-30px_80px_rgba(255,255,255,0.7)]";

const band = "absolute bg-gradient-to-r from-[#b9babf] via-[#cfd0d3] to-[#bcbdc1]";
const key =
  "absolute rounded-sm border-2 border-[#3a4456] bg-[linear-gradient(#0c1118_0,#7f90a8_14px,#b4c8e2_22px,#b4c8e2_calc(100%_-_22px),#7f90a8_calc(100%_-_14px),#0c1118_100%)]";

export default function App() {
  return (
    <div className="relative w-full bg-white pl-3 pr-2 font-['Liberation_Sans',Arial,sans-serif] text-[#9dabd1]">
      <span className={`${key} left-0 top-[662px] h-[124px] w-4`} />
      <span className={`${key} left-1 top-[902px] h-[246px] w-3`} />
      <span className={`${key} left-1 top-[1216px] h-[248px] w-3`} />
      <span className={`${key} right-0 top-[935px] h-[365px] w-3`} />

      <div className="relative rounded-[300px] border-[3px] border-[#a6a8b0] bg-[#e0e1e3] p-[19px]">
        <span className={`${band} left-0 top-[304px] h-[18px] w-5`} />
        <span className={`${band} right-0 top-[334px] h-[18px] w-5`} />
        <span className={`${band} bottom-[334px] left-0 h-[18px] w-5`} />
        <span className={`${band} bottom-[334px] right-0 h-[18px] w-5`} />
        <span className={`${band} right-[318px] top-0 h-5 w-[18px]`} />
        <span className={`${band} bottom-0 left-[322px] h-5 w-[18px]`} />

        <div className="relative rounded-[278px] border-[3px] border-[#403d3f] bg-black p-[41px]">
          <span className="absolute left-1/2 -top-[3px] h-[15px] w-[344px] -translate-x-1/2 rounded-b-lg border-2 border-t-0 border-[#2b2a2b] bg-[#1c1b1a]" />

          <div className="overflow-hidden rounded-[248px] bg-[#e4ebf5]">
            <header className="grid grid-cols-[1fr_450px_1fr] items-center pr-2 pt-[52px] text-black">
              <time className="pr-[166px] text-right font-['Inter',sans-serif] text-[64px] font-semibold leading-none">
                9:41
              </time>
              <div className="flex h-[140px] items-center justify-end rounded-full bg-[#030303] pr-[30px]">
                <svg viewBox="0 0 80 80" className="size-20" aria-hidden="true">
                  <defs>
                    <linearGradient id="lens" x1="0" x2="1" y1="0" y2="0">
                      <stop offset="0" stopColor="#2d6b62" />
                      <stop offset=".5" stopColor="#020408" />
                      <stop offset=".65" stopColor="#041430" />
                      <stop offset="1" stopColor="#2a52b8" />
                    </linearGradient>
                  </defs>
                  <circle cx="40" cy="40" r="40" fill="#050703" />
                  <circle cx="40" cy="40" r="22" fill="url(#lens)" />
                  <circle cx="32" cy="32" r="3" fill="#ffffff" />
                  <circle cx="46" cy="46" r="6" fill="#918fa3" />
                </svg>
              </div>
              <div className="flex items-center gap-[30px] pb-1 pl-[76px]">
                <SignalIcon />
                <WifiIcon />
                <BatteryIcon />
              </div>
            </header>

            <main className="pb-[257px] pl-[86px] pr-[78px] pt-[87px] [-webkit-text-stroke:1px_currentColor]">
              <section className="relative z-10 -mb-[67px] flex justify-between">
                <div className="flex w-[63.25%] flex-col items-start gap-[62px]">
                  <button type="button" className={`${raised} h-[169px] w-full rounded-full text-[60px] leading-none`}>
                    HOME
                  </button>
                  <button
                    type="button"
                    className={`${raised} h-[150px] w-[73%] whitespace-nowrap rounded-full text-[42px] leading-[46px]`}
                  >
                    CLOSEST POLLUTER
                    <br />
                    TATA STEEL
                  </button>
                </div>
                <div className="-mr-2 flex flex-col items-center gap-[34px] pt-[46px]">
                  <h2 className="text-[72px] leading-none">Particles</h2>
                  <div className={`${raised} flex h-[376px] w-[188px] items-center justify-center rounded-full pt-4`}>
                    <ParticlesIcon />
                  </div>
                </div>
              </section>

              <figure className={`${raised} rounded-full [-webkit-text-stroke:0]`}>
                <AirMap />
              </figure>

              <section className="mt-20 flex items-start gap-0.5">
                <div className="flex flex-col items-center gap-11">
                  <h2 className="text-[72px] leading-none">Temperature</h2>
                  <div className={`${raised} flex h-[450px] w-[225px] flex-col items-center gap-11 rounded-full pt-[119px]`}>
                    <p className="text-[60px] leading-none">23°</p>
                    <span className="h-[143px] w-[150px] rounded-[50%] bg-gradient-to-b from-[#ffc854] to-[#ff6a20] shadow-[inset_0_10px_14px_#fff08c,inset_0_0_14px_#ffc04c]" />
                  </div>
                </div>

                <div className="flex min-w-0 flex-1 flex-col items-center pt-[75px]">
                  <h2 className="text-[72px] leading-none">AirShield</h2>
                  <p className="mt-5 flex items-center gap-4 text-[60px] leading-none">
                    Safe
                    <button type="button" aria-label="About AirShield">
                      <InfoIcon />
                    </button>
                  </p>
                  <div className={`${raised} mt-[49px] flex h-[188px] w-full items-center rounded-full pl-[30%]`}>
                    <CloudIcon />
                    <span className="-ml-1">
                      <ShieldIcon />
                    </span>
                  </div>
                </div>
              </section>

              <button type="button" className={`${raised} mt-[74px] h-[145px] w-full rounded-full text-[60px] leading-none`}>
                CURRENTLY
              </button>
            </main>
          </div>
        </div>
      </div>
    </div>
  );
}
